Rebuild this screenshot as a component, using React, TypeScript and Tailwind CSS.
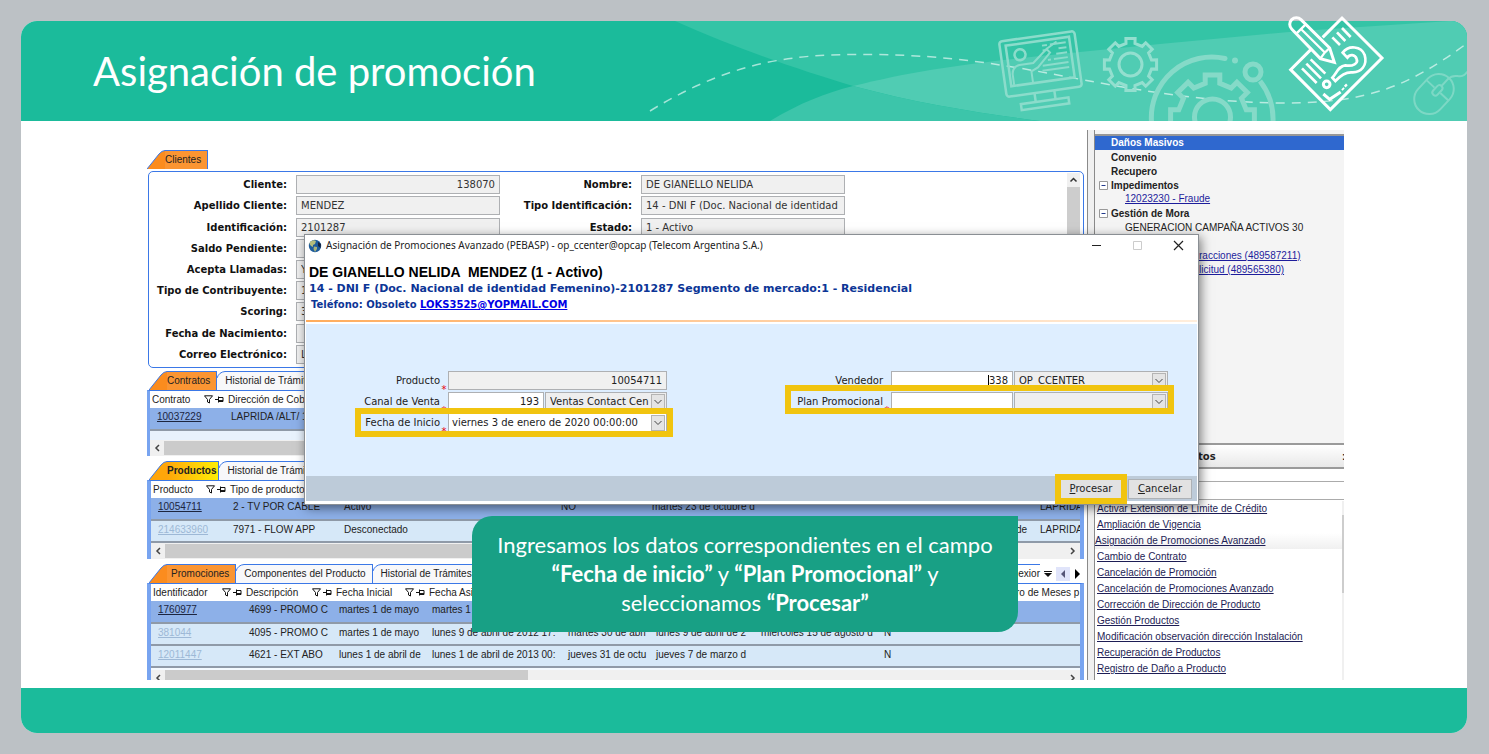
import React from "react";
import clsx from "clsx";

const arial = "font-['Liberation_Sans',Arial,sans-serif]";
const verdana = "font-['DejaVu_Sans',Verdana,sans-serif]";
const calibri = "font-['Lato',Calibri,sans-serif]";

function gearPath(cx: number, cy: number, outer: number, inner: number, teeth: number) {
  const step = (Math.PI * 2) / teeth;
  const points: string[] = [];
  for (let i = 0; i < teeth; i++) {
    const a = i * step - Math.PI / 2;
    const corners: [number, number][] = [
      [inner, a - step * 0.27],
      [outer, a - step * 0.22],
      [outer, a + step * 0.22],
      [inner, a + step * 0.27],
    ];
    corners.forEach(([r, t]) => points.push(`${(cx + r * Math.cos(t)).toFixed(1)} ${(cy + r * Math.sin(t)).toFixed(1)}`));
  }
  return `M${points.join("L")}Z`;
}

function HeaderArt() {
  return (
    <svg aria-hidden="true" viewBox="21 21 1446 100" preserveAspectRatio="xMaxYMid slice" className="absolute inset-0 h-full w-full rounded-t-2xl" fill="none">
      <path d="M675 21C740 50 800 70 853 86C920 104 980 113 1040 121H1467V21Z" fill="#34c4a6" />
      <path d="M853 86C920 69 980 62 1070 53L1160 44L1300 31L1450 21H1467V121H1040C980 113 920 104 853 86Z" fill="#50ccb3" />
      <path d="M770 121C800 103 825 93 853 86C920 104 980 113 1040 121Z" fill="#3cc5aa" />
      <path d="M650 111C740 55 810 54 873 54.500C950 55 1010 66 1063 76S1200 103 1285 103C1370 103 1410 85 1466 44" stroke="#fff" strokeOpacity=".6" strokeWidth="1.500" strokeDasharray="9 7" />
      <g transform="translate(1040.500 64) rotate(-8)" stroke="#8bdccb" strokeWidth="2.500">
        <rect x="-38" y="-28" width="76" height="56" rx="3" />
        <rect x="-32" y="-23" width="64" height="41" />
        <circle cx="-19" cy="-12" r="5.500" />
        <path d="M-29 17V6Q-28-1-21-2H-7L8-14L11-10L-3 3L-10 6V17M8-14L19-20" strokeWidth="2" />
        <path d="M4-18H9M12-18H28M4-13H8M20-13H28M17-8H28M8-3H11M14-3H28M2 2H28M1 7H28" strokeWidth="2" />
        <path d="M-10 28V37M10 28V37" />
        <rect x="-25" y="37" width="48" height="6" />
      </g>
      <g stroke="#93dfcf" strokeWidth="3">
        <path d={gearPath(1130.5, 64.500, 26.500, 21.500, 8)} />
        <circle cx="1130.500" cy="64.500" r="11.500" />
      </g>
      <g stroke="#85dac8" strokeWidth="5">
        <path d="M1151.500 122A60.500 60.500 0 0 1 1225 58.500" strokeLinecap="round" />
        <path d="M1260 81Q1274 99 1273 122" />
        <circle cx="1253" cy="72" r="8" />
        <path d={gearPath(1212.5, 117, 42.500, 34.500, 8)} />
        <circle cx="1212.500" cy="117" r="18" />
      </g>
      <circle cx="1235" cy="60.500" r="3" fill="#85dac8" />
      <g transform="translate(1434 94) rotate(43)" stroke="#7dd8c5" strokeWidth="2">
        <rect x="-15" y="-22" width="30" height="44" rx="15" />
        <path d="M-15-5H-4M4-5H15M0-22V-11" />
        <rect x="-3" y="-11" width="6" height="12" rx="3" />
      </g>
      <path d="M1448 79C1456 71 1460 82 1468 71" stroke="#7dd8c5" strokeWidth="2" />
    </svg>
  );
}

function FormIcon() {
  return (
    <svg aria-hidden="true" viewBox="0 0 330 315" className="absolute -top-[11px] right-[75px] h-[105px] w-[110px]" fill="none" stroke="#fff" strokeWidth="9">
      <path d="M122 82L180 24L300 144L145 299L26 179L90 115" />
      <path d="M29 57A19 19 0 0 1 57 29L143 114L157 157L115 146Z" />
      <path d="M43 71L71 43M57 57L130 129M115 146L128 128L143 114" strokeWidth="7" />
      <path d="M151 82L174 105M165 67L190 93M180 54L206 81M60 175L104 219M73 161L117 205M86 148L130 191" strokeWidth="8" />
      <path d="M182 128C200 104 238 108 248 135C257 165 238 190 207 187C190 187 175 197 160 213L151 203C165 188 169 168 190 166C213 170 229 160 224 147C219 132 203 132 196 143Z" strokeWidth="8" />
      <circle cx="134" cy="223" r="10" />
      <path d="M124 252L143 268L176 246M181 235L185 239M189 224L194 229" />
    </svg>
  );
}

function Tab({ label, tone = "plain", roomy }: { label: string; tone?: "plain" | "orange" | "gold"; roomy?: boolean }) {
  const active = tone !== "plain";
  return (
    <button type="button" className={clsx("flex h-[19px] whitespace-nowrap text-[10px] leading-[18px] text-[#222]", arial)}>
      <svg aria-hidden="true" viewBox={active ? "0 0 18 19" : "0 0 8 19"} className={clsx("h-[19px] shrink-0", active ? "w-[18px]" : "w-2")}>
        <path
          d={active ? "M0 19L12 4Q15 .5 18 .5V19Z" : "M0 19V6Q2 1 8 .5V19Z"}
          fill={tone === "orange" ? "#fb8c1e" : tone === "gold" ? "#ffa60a" : "#f8f8fa"}
        />
        <path d={active ? "M0 19L12 4Q15 .5 18 .5" : "M0 7Q2 1 8 .5"} fill="none" stroke="#3b78e7" />
      </svg>
      <span
        className={clsx(
          "h-[19px] border-t border-r border-[#3b78e7]",
          tone === "orange" && "bg-[#fb9532] pr-1.5",
          tone === "gold" && "bg-linear-to-r from-[#ffa60a] to-[#ffee05] pr-0.5 font-bold",
          tone === "plain" && "bg-[#f8f8fa] pr-1.5",
          roomy && "pl-1",
        )}
      >
        {label}
      </span>
    </button>
  );
}

function ReadField({ label, value, right, id }: { label: string; value: string; right?: boolean; id: string }) {
  return (
    <>
      <label htmlFor={id} className="text-right font-bold whitespace-nowrap">{label}</label>
      <input id={id} readOnly defaultValue={value} className={clsx("h-[19px] w-full border border-[#aeb0b3] bg-[#f0f0f0] px-1 text-[#333]", right && "text-right")} />
    </>
  );
}

function ColumnIcons() {
  return (
    <svg aria-hidden="true" viewBox="0 0 20 9" className="h-[9px] w-5 shrink-0" fill="none" stroke="#111">
      <path d="M.5 .8H8.500L5.500 4.500V8L3.500 7V4.500Z" />
      <path d="M11 4.500H14M14.500 1.500V7.500M14.500 2.500H19V6.500H14.500" />
      <path d="M14.500 5.800H19" strokeWidth="1.500" />
    </svg>
  );
}

function HScroll({ short, clipped }: { short?: boolean; clipped?: boolean }) {
  return (
    <div className={clsx("flex items-center bg-[#f0f0f0] text-[#444]", clipped ? "h-2.5 items-start" : "h-4")}>
      <svg aria-hidden="true" viewBox="0 0 14 16" className="h-4 w-3.5 shrink-0"><path d="M9 5L6 8L9 11" fill="none" stroke="currentColor" strokeWidth="1.500" /></svg>
      <div className={clsx("h-3.5 bg-[#cbcbcb]", short ? "w-[363px]" : "w-[800px]", clipped && "h-2.5")} />
      <svg aria-hidden="true" viewBox="0 0 14 16" className="ml-auto h-4 w-3.5 shrink-0"><path d="M5 5L8 8L5 11" fill="none" stroke="currentColor" strokeWidth="1.500" /></svg>
    </div>
  );
}

type Row = { cells: string[]; selected?: boolean };

function Grid({ widths, heads, icons, rows }: { widths: string[]; heads: string[]; icons: number; rows: Row[] }) {
  return (
    <div className="overflow-hidden">
      <table className={clsx("w-full table-fixed border-collapse text-[10px] text-[#222]", arial)}>
        <colgroup>{widths.map((w, i) => <col key={i} className={w} />)}</colgroup>
        <thead>
          <tr className="h-[17px] bg-white">
            {heads.map((h, i) => (
              <th key={i} scope="col" className="overflow-hidden p-0 text-left font-normal whitespace-nowrap">
                <div className="flex h-[17px] items-center justify-between px-0.5 leading-4">
                  <span>{h}</span>
                  {i < icons && <ColumnIcons />}
                </div>
              </th>
            ))}
          </tr>
        </thead>
        <tbody>
          {rows.map((r, ri) => (
            <tr key={ri} className={clsx("h-[22px] border-b-2 border-[#8f9aa8]", r.selected ? "bg-[#8db0e8]" : "bg-[#d6e8f8]")}>
              {r.cells.map((c, i) => (
                <td key={i} className={clsx("overflow-hidden p-0 align-top leading-[18px] whitespace-nowrap", i === 0 ? "pl-[7px]" : "pl-[5px]")}>
                  {i === 0 ? <a href="#" className={clsx("underline", r.selected ? "text-[#1c2540]" : "text-[#9db8d6]")}>{c}</a> : c}
                </td>
              ))}
            </tr>
          ))}
        </tbody>
      </table>
    </div>
  );
}

function Chevron() {
  return (
    <span className="pointer-events-none absolute top-0.5 right-0.5 bottom-px flex w-3.5 items-center justify-center border border-[#b4b4b4] bg-[#e4e4e4]">
      <svg aria-hidden="true" viewBox="0 0 10 6" className="h-1.5 w-2.5"><path d="M1.500 1L5 4.500L8.500 1" fill="none" stroke="#444" /></svg>
    </span>
  );
}

function Choice({ value, label, white, id }: { value: string; label: string; white?: boolean; id?: string }) {
  return (
    <span className="relative block min-w-0 flex-1">
      <select id={id} aria-label={id ? undefined : label} defaultValue={value} className={clsx("block h-[19px] w-full appearance-none border border-[#aeb0b3] pr-4 text-[#222]", white ? "bg-white pl-[3px]" : "bg-[#eeeeee] pl-1")}>
        <option>{value}</option>
      </select>
      <Chevron />
    </span>
  );
}

function FieldRow({ id, label, required, wide, mark, children }: { id: string; label: string; required?: boolean; wide?: boolean; mark?: string; children: React.ReactNode }) {
  return (
    <div className="relative flex h-[19px]">
      <label htmlFor={id} className={clsx("text-right leading-[19px] whitespace-nowrap", wide ? "w-24" : "w-[83px]")}>{label}</label>
      <span className="flex w-2 items-end justify-center text-[10px] leading-px text-red-600">{required ? "*" : ""}</span>
      <div className="flex min-w-0 flex-1 gap-px">{children}</div>
      {mark && <span className={clsx("pointer-events-none absolute border-6 border-[#f1c40f]", mark)} />}
    </div>
  );
}

const box = "h-[19px] border border-[#aeb0b3] px-1 text-right text-[#222]";

function Dialog() {
  return (
    <section role="dialog" aria-label="Asignación de Promociones Avanzado" className={clsx("absolute top-[104px] right-[145px] left-[157px] border border-[#8a8f94] bg-white pb-[3px] text-[10px] text-[#222] shadow-[2px_3px_10px_rgba(0,0,0,0.5)]", verdana)}>
      <div className="flex h-[21px] items-center pr-3.5 pl-[3px]">
        <svg aria-hidden="true" viewBox="0 0 14 14" className="mr-1 h-3.5 w-3.5">
          <circle cx="7" cy="7" r="6.200" fill="#1d5c9c" />
          <path d="M2 3Q5 0 8 2L7 5L5 6L5 8L3 7L1.500 5Z" fill="#b5bd7c" />
          <path d="M6 7.500L9 8L9 10L7 13L5.500 10Z" fill="#a8b27a" />
          <path d="M10 3L13 5L12.500 9L10 7Z" fill="#16233c" />
        </svg>
        <h2 className="font-['Noto_Sans','Segoe_UI',sans-serif] text-[10px] whitespace-nowrap">Asignación de Promociones Avanzado (PEBASP) - op_ccenter@opcap (Telecom Argentina S.A.)</h2>
        <div className="ml-auto flex gap-[30px]">
          <button type="button" aria-label="Minimizar"><svg viewBox="0 0 11 11" className="h-[11px] w-[11px]"><path d="M1 5.500H10" stroke="#222" /></svg></button>
          <button type="button" aria-label="Maximizar" disabled><svg viewBox="0 0 11 11" className="h-[11px] w-[11px]"><path d="M1.500 1.500H9.500V9.500H1.500Z" fill="none" stroke="#ccc" /></svg></button>
          <button type="button" aria-label="Cerrar"><svg viewBox="0 0 11 11" className="h-[11px] w-[11px]"><path d="M1 1L10 10M10 1L1 10" stroke="#222" strokeWidth="1.200" /></svg></button>
        </div>
      </div>
      <div className="h-[64px] pt-2 pl-1 font-bold text-[#0c3596]">
        <p className={clsx("text-[14px] leading-4 whitespace-pre text-black", arial)}>{"DE GIANELLO NELIDA  MENDEZ (1 - Activo)"}</p>
        <p className="text-[11px] leading-[18px] whitespace-nowrap">14 - DNI F (Doc. Nacional de identidad Femenino)-2101287 Segmento de mercado:1 - Residencial</p>
        <p className="pl-0.5 leading-[14px] whitespace-nowrap">Teléfono: Obsoleto <a href="#" className="text-[#0000e6] underline">LOKS3525@YOPMAIL.COM</a></p>
      </div>
      <div className="mx-px h-0.5 bg-linear-to-r from-[#ffac5c] to-[#ffeedd]" />
      <form className="mx-px mt-0.5 bg-[#deeeff]" onSubmit={(e) => e.preventDefault()}>
        <div className="flex h-[152px] items-start justify-between pt-[47px] pr-[29px] pl-[51px]">
          <div className="flex w-[310px] flex-col gap-0.5">
            <FieldRow id="producto" label="Producto" required>
              <input id="producto" readOnly defaultValue="10054711" className={clsx(box, "w-full bg-[#f0f0f0]")} />
            </FieldRow>
            <FieldRow id="canal" label="Canal de Venta" required>
              <input id="canal" defaultValue="193" className={clsx(box, "w-24 bg-white")} />
              <Choice label="Canal" value="Ventas Contact Cen" />
            </FieldRow>
            <FieldRow id="fecha" label="Fecha de Inicio" required mark="-inset-y-[5px] -left-0.5 -right-1.5">
              <Choice id="fecha" label="Fecha de Inicio" value="viernes 3 de enero de 2020 00:00:00" white />
            </FieldRow>
          </div>
          <div className="flex w-[381px] flex-col gap-0.5">
            <FieldRow id="vendedor" label="Vendedor" required wide>
              <span className="relative">
                <input id="vendedor" defaultValue="338" className={clsx(box, "w-[122px] bg-white")} />
                <span className="pointer-events-none absolute top-1 right-6 h-3 w-px bg-black" />
              </span>
              <Choice label="Nombre del vendedor" value="OP_CCENTER" />
            </FieldRow>
            <FieldRow id="plan" label="Plan Promocional" required wide mark="-top-[7px] -bottom-[3px] -left-0.5 -right-1.5">
              <input id="plan" className={clsx(box, "w-[122px] bg-white")} />
              <Choice label="Nombre del plan" value="" />
            </FieldRow>
          </div>
        </div>
        <div className="flex h-[25px] items-center justify-end gap-1.5 bg-[#bdcbd9] pr-[5px]">
          <button type="submit" className="relative h-5 w-[62px] border border-[#adb1b5] bg-[#e2e2e2]">
            <u>P</u>rocesar
            <span className="pointer-events-none absolute -inset-[6px] border-6 border-[#f1c40f]" />
          </button>
          <button type="button" className="h-5 w-16 border border-[#adb1b5] bg-[#e2e2e2]"><u>C</u>ancelar</button>
        </div>
      </form>
    </section>
  );
}

const actions = [
  "Activar Extensión de Límite de Crédito",
  "Ampliación de Vigencia",
  "Asignación de Promociones Avanzado",
  "Cambio de Contrato",
  "Cancelación de Promoción",
  "Cancelación de Promociones Avanzado",
  "Corrección de Dirección de Producto",
  "Gestión Productos",
  "Modificación observación dirección Instalación",
  "Recuperación de Productos",
  "Registro de Daño a Producto",
];

function TreeItem({ label, open }: { label: string; open?: boolean }) {
  return (
    <li className="flex h-[14px] items-center font-bold">
      <span className="flex w-4 justify-center">
        {open && <svg aria-hidden="true" viewBox="0 0 9 9" className="h-[9px] w-[9px]"><path d="M.5 .5H8.500V8.500H.5Z" fill="#fff" stroke="#999" /><path d="M2.500 4.500H6.500" stroke="#223a8c" /></svg>}
      </span>
      {label}
    </li>
  );
}

function Sidebar() {
  return (
    <aside className={clsx("flex w-[257px] shrink-0 text-[10px] text-[#222]", arial)}>
      <div className="w-2 border-x border-[#8a8a8a] bg-[#f0f0f0]" />
      <div className="flex min-w-0 flex-1 flex-col">
        <div className="h-[313px] bg-[#f4f4f4]">
          <div className="mt-1 border-t-2 border-[#979797]" />
          <p className="h-3.5 bg-[#2f68cf] pl-4 leading-[14px] font-bold text-white">Daños Masivos</p>
          <ul>
            <TreeItem label="Convenio" />
            <TreeItem label="Recupero" />
            <TreeItem label="Impedimentos" open />
            <li className="h-[14px] pl-[30px] leading-[14px]"><a href="#" className="text-[#1d1d9c] underline">12023230 - Fraude</a></li>
            <TreeItem label="Gestión de Mora" open />
            <li className="h-[15px] pl-[30px] leading-[15px]">GENERACION CAMPAÑA ACTIVOS 30</li>
            <li className="mt-3.5 pl-[104px] leading-[14px]"><a href="#" className="text-[#1d1d9c] underline">racciones (489587211)</a></li>
            <li className="pl-[104px] leading-[14px]"><a href="#" className="text-[#1d1d9c] underline">licitud (489565380)</a></li>
          </ul>
        </div>
        <div className="flex h-[26px] items-center justify-between border-y-2 border-[#9a9a9a] bg-linear-to-b from-white to-[#e8e8e8] pl-[103px] font-bold">
          <span className={verdana}>tos</span>
          <span className="w-0.5 overflow-hidden">:</span>
        </div>
        <input aria-label="Buscar" className="mt-3 h-[19px] w-full border-y border-[#ababab] bg-white" />
        <div className="flex flex-1 justify-between pt-px">
          <ul className="min-w-0 flex-1">
            {actions.map((a, i) => (
              <li key={a} className={clsx("h-4 leading-4 whitespace-nowrap", i === 2 ? "bg-linear-to-b from-white to-[#f0f0f0]" : "pl-0.5")}>
                <a href="#" className="text-[#1d1d55] underline">{a}</a>
              </li>
            ))}
          </ul>
          <div className="w-0.5 bg-[#f0f0f0] pt-3.5"><div className="h-[78px] bg-[#cdcdcd]" /></div>
        </div>
      </div>
    </aside>
  );
}

function Workspace() {
  return (
    <div className="min-w-0 flex-1 pt-5 pr-px">
      <div className="flex"><Tab label="Clientes" tone="orange" /></div>
      <div className={clsx("mt-0.5 mr-0.5 ml-px flex h-[197px] justify-between rounded-[5px] border-[1.5px] border-[#3b78e7] bg-white pr-[3px] text-[10px] text-[#111]", verdana)}>
        <div className="grid grid-cols-[138px_204px_123px_204px] grid-rows-[repeat(9,1fr)] items-center gap-x-[9px] py-0.5">
          <ReadField id="cliente" label="Cliente:" value="138070" right />
          <ReadField id="nombre" label="Nombre:" value="DE GIANELLO NELIDA" />
          <ReadField id="apellido" label="Apellido Cliente:" value="MENDEZ" />
          <ReadField id="tipoid" label="Tipo Identificación:" value="14 - DNI F (Doc. Nacional de identidad" />
          <ReadField id="ident" label="Identificación:" value="2101287" />
          <ReadField id="estado" label="Estado:" value="1 - Activo" />
          <div className="col-span-2 col-start-1 row-span-6 grid grid-cols-subgrid grid-rows-subgrid items-center">
            <ReadField id="saldo" label="Saldo Pendiente:" value="" />
            <ReadField id="llamadas" label="Acepta Llamadas:" value="Y" />
            <ReadField id="contrib" label="Tipo de Contribuyente:" value="1" />
            <ReadField id="scoring" label="Scoring:" value="3" />
            <ReadField id="nacimiento" label="Fecha de Nacimiento:" value="" />
            <ReadField id="correo" label="Correo Electrónico:" value="L" />
          </div>
        </div>
        <div className="my-px flex w-[13px] flex-col bg-[#cdcdcd]">
          <svg aria-hidden="true" viewBox="0 0 13 14" className="h-3.5 w-[13px] bg-[#f0f0f0]"><path d="M3.500 8.500L6.500 5.500L9.500 8.500" fill="none" stroke="#333" strokeWidth="1.500" /></svg>
        </div>
      </div>

      <div className="mt-[3px] flex pl-0.5"><Tab label="Contratos" tone="orange" /><Tab label="Historial de Trámites" /></div>
      <div className="mr-0.5 border-x-3 border-[#78a4f0] border-t border-t-[#3b78e7] bg-[#e8f2fd]">
        <Grid
          widths={["w-[76px]", "w-auto"]}
          heads={["Contrato", "Dirección de Cobro"]}
          icons={1}
          rows={[{ selected: true, cells: ["10037229", "LAPRIDA /ALT/ 1"] }]}
        />
        <div className="h-[9px]" />
        <HScroll />
      </div>

      <div className="mt-[5px] flex pl-0.5"><Tab label="Productos" tone="gold" /><Tab label="Historial de Trámites" /></div>
      <div className="mr-0.5 border-x-4 border-[#78a4f0] border-t border-t-[#3b78e7]">
        <Grid
          widths={["w-[77px]", "w-[111px]", "w-[217px]", "w-[91px]", "w-[364px]", "w-[24px]", "w-auto"]}
          heads={["Producto", "Tipo de producto", "", "", "", "", ""]}
          icons={1}
          rows={[
            { selected: true, cells: ["10054711", "2 - TV POR CABLE", "Activo", "NO", "martes 23 de octubre d", "", "LAPRIDA"] },
            { cells: ["214633960", "7971 - FLOW APP", "Desconectado", "", "", "de", "LAPRIDA"] },
          ]}
        />
        <HScroll />
      </div>

      <div className="mt-[5px] flex items-center pl-0.5">
        <Tab label="Promociones" tone="orange" roomy /><Tab label="Componentes del Producto" /><Tab label="Historial de Trámites" />
        <div className={clsx("ml-auto flex items-center gap-1 pr-1.5 text-[10px] text-[#222]", arial)}>
          <span className="h-[19px] border-t border-[#3b78e7] leading-[18px]">exior</span>
          <svg aria-hidden="true" viewBox="0 0 8 8" className="h-2 w-2"><path d="M0 1.500H8" stroke="#111" /><path d="M0 3H8L4 7Z" fill="#111" /></svg>
          <svg aria-hidden="true" viewBox="0 0 14 14" className="h-3.5 w-3.5 bg-[#e0e4fa]"><path d="M9 3V11L5 7Z" fill="#557" /></svg>
          <svg aria-hidden="true" viewBox="0 0 6 10" className="h-2.5 w-1.5"><path d="M1 0V10L6 5Z" fill="#000" /></svg>
        </div>
      </div>
      <div className="mr-0.5 border-x-4 border-[#78a4f0] border-t border-t-[#3b78e7]">
        <Grid
          widths={["w-[93px]", "w-[90px]", "w-[93px]", "w-[136px]", "w-[88px]", "w-[105px]", "w-[123px]", "w-[135px]", "w-auto"]}
          heads={["Identificador", "Descripción", "Fecha Inicial", "Fecha Asi", "", "", "", "", "ro de Meses p"]}
          icons={3}
          rows={[
            { selected: true, cells: ["1760977", "4699 - PROMO C", "martes 1 de mayo", "martes 1", "", "", "", "", ""] },
            { cells: ["381044", "4095 - PROMO C", "martes 1 de mayo", "lunes 9 de abril de 2012 17:", "martes 30 de abri", "lunes 9 de abril de 2", "miércoles 15 de agosto d", "N", ""] },
            { cells: ["12011447", "4621 - EXT ABO", "lunes 1 de abril de", "lunes 1 de abril de 2013 00:", "jueves 31 de octu", "jueves 7 de marzo d", "", "N", ""] },
          ]}
        />
        <div className="h-0.5 bg-[#f4faff]" />
        <div className="overflow-hidden"><HScroll short clipped /></div>
      </div>
    </div>
  );
}

export default function App() {
  return (
    <div className="flex min-h-screen flex-col bg-[#bcc1c5] py-[21px] pr-[22px] pl-[21px]">
      <main className="flex flex-1 flex-col rounded-2xl bg-white">
        <header className="relative flex h-[100px] items-center rounded-t-2xl bg-[#1bbb9b] pl-[72px]">
          <HeaderArt />
          <FormIcon />
          <h1 className={clsx("relative text-[40px] text-white", calibri)}>Asignación de promoción</h1>
        </header>
        <div className="relative mt-[9px] mr-[123px] ml-[126px] flex">
          <Workspace />
          <Sidebar />
          <Dialog />
          <div className={clsx("absolute top-[386px] left-[325px] w-[546px] rounded-tl-[20px] rounded-br-[20px] bg-[#18a085] pt-[14px] pb-[15px] text-center text-[22px] leading-[29px] whitespace-nowrap text-white", calibri)}>
            <p>Ingresamos los datos correspondientes en el campo</p>
            <p><strong>“Fecha de inicio”</strong> y <strong>“Plan Promocional”</strong> y</p>
            <p>seleccionamos <strong>“Procesar”</strong></p>
          </div>
        </div>
        <footer className="mt-auto h-[45px] rounded-b-2xl bg-[#1bbb9b]" />
      </main>
    </div>
  );
}
